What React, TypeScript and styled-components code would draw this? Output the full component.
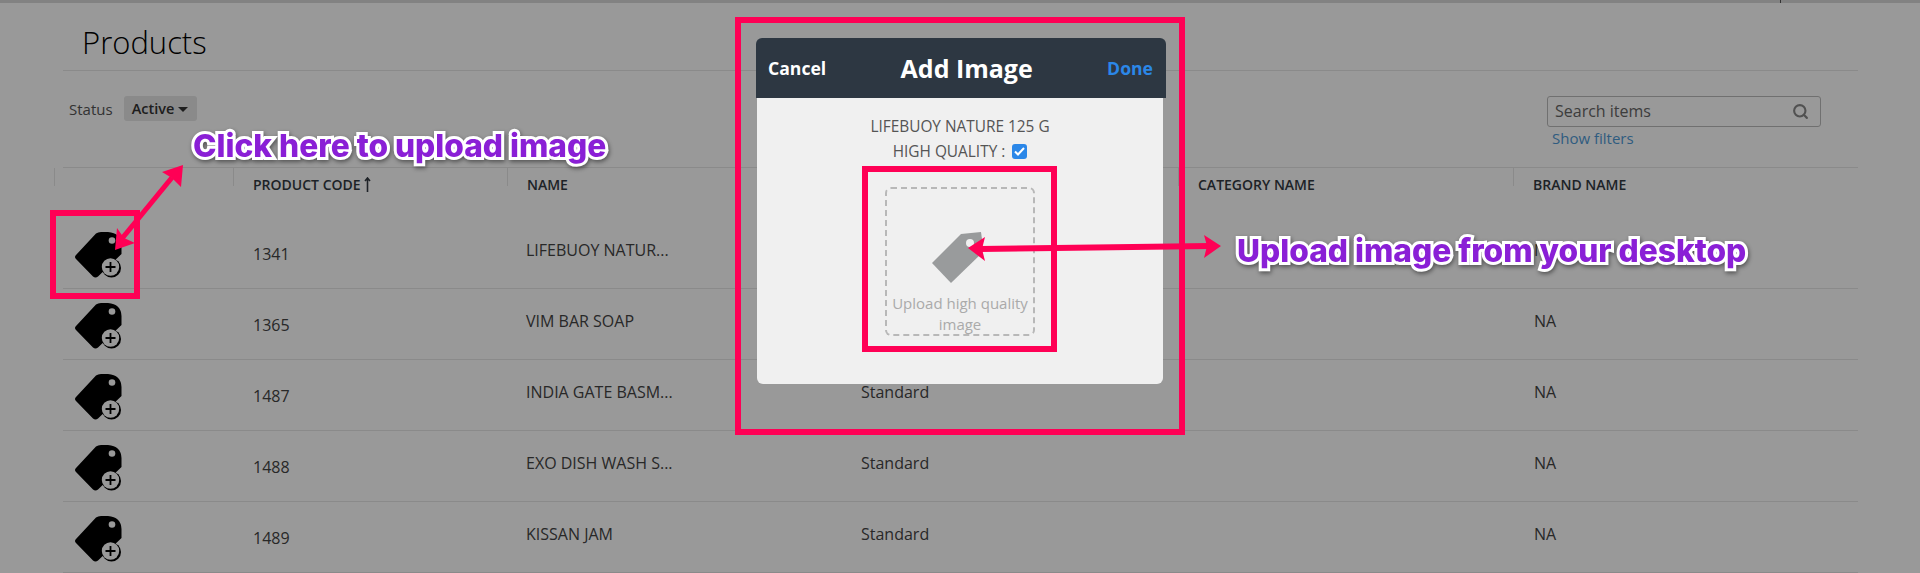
import React from 'react';
import styled, { createGlobalStyle } from 'styled-components';
import { Search } from 'lucide-react';

const Global = createGlobalStyle`
  html, body { margin: 0; padding: 0; height: 573px; overflow: hidden; background: #fff; }
  body { font-family: "Open Sans", "Liberation Sans", sans-serif; color: #333; }
  * { box-sizing: border-box; }
`;

const Screen = styled.div`
  position: relative;
  width: 1920px;
  height: 573px;
  overflow: hidden;
`;
const TopBar = styled.div`
  height: 3px;
  background: #d9d9d9;
  padding-left: 1780px;
`;
const TopTick = styled.div`
  width: 1px;
  height: 3px;
  background: #555;
`;
const Content = styled.main`
  margin-left: 63px;
  width: 1795px;
`;
const TitleBar = styled.header`
  height: 68px;
  border-bottom: 1px solid #e6e6e6;
  padding: 21px 0 0 19px;
`;
const Title = styled.h1`
  margin: 0;
  font-size: 31px;
  line-height: 36px;
  font-weight: 300;
  color: #000;
`;
const Toolbar = styled.div`
  height: 96px;
  padding: 25px 37px 0 6px;
  display: flex;
  justify-content: space-between;
  align-items: flex-start;
`;
const StatusGroup = styled.div`
  display: flex;
  align-items: center;
  gap: 11px;
  height: 25px;
  font-size: 15px;
  line-height: 22px;
  color: #555;
`;
const StatusButton = styled.button`
  width: 73px;
  height: 25px;
  display: flex;
  align-items: center;
  justify-content: center;
  gap: 4px;
  border: 0;
  border-radius: 3px;
  background: #e6e6e6;
  font: 600 14.5px "Open Sans", sans-serif;
  color: #333;
  padding: 0;
`;
const Caret = styled.span`
  width: 0;
  height: 0;
  margin-top: 2px;
  border-left: 5px solid transparent;
  border-right: 5px solid transparent;
  border-top: 5px solid #333;
`;
const SearchColumn = styled.div`
  width: 274px;
`;
const SearchBox = styled.div`
  height: 31px;
  display: flex;
  align-items: center;
  padding: 0 11px 1px 7px;
  border: 1px solid #bbb;
  border-radius: 3px;
  color: #888;
`;
const SearchInput = styled.input`
  flex: 1;
  min-width: 0;
  border: 0;
  outline: 0;
  padding: 0;
  background: transparent;
  font: 400 16px "Open Sans", sans-serif;
  color: #555;
  &::placeholder { color: #666; opacity: 1; }
`;
const ShowFilters = styled.a`
  display: block;
  margin: 1px 0 0 5px;
  font-size: 15px;
  line-height: 20px;
  color: #4f9ad6;
`;
const Table = styled.section`
  border-top: 1px solid #e6e6e6;
`;
const HeadRow = styled.div`
  display: grid;
  grid-template-columns: 179px 274px 333px 338px 335px 345px;
  height: 50px;
  margin-left: -9px;
`;
const HeadCell = styled.div`
  position: relative;
  display: flex;
  align-items: flex-start;
  padding: 7px 20px 0;
  font-size: 14px;
  line-height: 20px;
  font-weight: 600;
  color: #333a42;
  text-transform: uppercase;
  &::before {
    content: "";
    position: absolute;
    left: 0;
    top: 0;
    width: 1px;
    height: 18px;
    background: #e6e6e6;
  }
`;
const SortArrow = styled.svg`
  margin: 2px 0 0 3px;
`;
const Row = styled.div`
  display: grid;
  grid-template-columns: 170px 273px 335px 337px 336px 344px;
  height: 71px;
  border-bottom: 1px solid #e6e6e6;
  align-items: center;
  color: #444;
`;
const IconCell = styled.div`
  padding: 3px 0 0 12px;
  display: flex;
`;
const CodeCell = styled.div`
  padding: 1px 20px 0;
  font-size: 16px;
`;
const TextCell = styled.div`
  padding: 0 20px 6px;
  font-size: 16px;
  white-space: nowrap;
`;

const Backdrop = styled.div`
  position: absolute;
  inset: 0;
  background: rgba(0, 0, 0, 0.4);
  padding: 38px 0 0 756px;
`;
const Modal = styled.div`
  width: 410px;
`;
const ModalHeader = styled.div`
  height: 60px;
  background: #2d3742;
  border-radius: 6px 6px 0 0;
  display: flex;
  align-items: center;
  justify-content: space-between;
  padding: 0 13px 0 12px;
  font-size: 17.6px;
  font-weight: 700;
  color: #fff;
`;
const ModalTitle = styled.div`
  font-size: 25px;
  font-weight: 700;
`;
const DoneLabel = styled.span`
  color: #2b87e8;
`;
const ModalBody = styled.div`
  width: 406px;
  height: 286px;
  margin-left: 1px;
  background: #f0f0f0;
  border-radius: 0 0 6px 6px;
  display: flex;
  flex-direction: column;
  align-items: center;
  padding-top: 18px;
  font-size: 15.4px;
  color: #555;
`;
const ProductName = styled.div`
  line-height: 22px;
  height: 22px;
`;
const QualityRow = styled.label`
  display: flex;
  align-items: center;
  gap: 7px;
  height: 24px;
  margin-top: 1px;
`;
const QualityCheck = styled.span`
  width: 15px;
  height: 15px;
  border-radius: 3px;
  background: #2b87e8;
  display: flex;
  align-items: center;
  justify-content: center;
`;
const DropZone = styled.div`
  width: 150px;
  height: 149px;
  margin-top: 24px;
  border: 2px dashed #b8b8b8;
  border-radius: 6px;
  display: flex;
  flex-direction: column;
  align-items: center;
  padding-top: 43px;
  color: #aaa;
  font-size: 15px;
  line-height: 21px;
  text-align: center;
`;
const UploadTagSvg = styled.svg`
  margin-right: 6px;
  flex: none;
`;
const DropText = styled.div`
  margin-top: 10px;
  white-space: nowrap;
`;

const OuterMark = styled.div`
  position: absolute;
  left: 735px;
  top: 17px;
  width: 450px;
  height: 418px;
  border: 6px solid #ff0055;
`;
const InnerMark = styled.div`
  position: absolute;
  left: 862px;
  top: 166px;
  width: 195px;
  height: 186px;
  border: 6px solid #ff0055;
`;
const RowMark = styled.div`
  position: absolute;
  left: 50px;
  top: 210px;
  width: 90px;
  height: 89px;
  border: 6px solid #ff0055;
`;
const ArrowLayer = styled.svg`
  position: absolute;
  left: 0;
  top: 0;
`;
const Callout = styled.div<{ $left: number; $top: number }>`
  position: absolute;
  left: ${p => p.$left}px;
  top: ${p => p.$top}px;
  font-family: Inter, "Open Sans", sans-serif;
  font-size: 31.7px;
  line-height: 36px;
  font-weight: 800;
  white-space: nowrap;
  color: #8a1fd6;
  -webkit-text-stroke: 6px #fff;
  paint-order: stroke fill;
  filter: drop-shadow(1px 2px 2px rgba(0, 0, 0, 0.45));
`;

const TagIcon = () => (
  <svg width="47" height="46" viewBox="0 0 47 46" aria-hidden="true">
    <path
      d="M1 23 L21 1.5 Q23 0 26 0 L33 0 Q46 1 46.5 13 L46.5 22 L23 44.5 Q20.5 46.5 18 44.5 L1 27 Q-1 25 1 23 Z"
      fill="#000"
    />
    <circle cx="37" cy="8.5" r="3.3" fill="#fff" />
    <circle cx="36.5" cy="36" r="9.5" fill="#000" />
    <circle cx="35.5" cy="35" r="8.7" fill="#fff" />
    <path d="M35.5 30 V40 M30.5 35 H40.5" stroke="#000" strokeWidth="1.8" fill="none" />
  </svg>
);

const UploadTag = () => (
  <UploadTagSvg width="50" height="51" viewBox="0 0 50 51" aria-hidden="true">
    <path d="M0 31 L29 2 L49 0 L50 7 L50 21 L19 51 Z" fill="#999b9c" />
    <circle cx="38" cy="11" r="4" fill="#f0f0f0" />
  </UploadTagSvg>
);

const rows = [
  { code: '1341', name: 'LIFEBUOY NATUR...', type: 'Standard' },
  { code: '1365', name: 'VIM BAR SOAP', type: 'Standard' },
  { code: '1487', name: 'INDIA GATE BASM...', type: 'Standard' },
  { code: '1488', name: 'EXO DISH WASH S...', type: 'Standard' },
  { code: '1489', name: 'KISSAN JAM', type: 'Standard' },
];

export default function App() {
  return (
    <Screen>
      <Global />
      <TopBar><TopTick /></TopBar>
      <Content>
        <TitleBar><Title>Products</Title></TitleBar>
        <Toolbar>
          <StatusGroup>
            Status
            <StatusButton>Active<Caret /></StatusButton>
          </StatusGroup>
          <SearchColumn>
            <SearchBox>
              <SearchInput placeholder="Search items" readOnly />
              <Search size={17} strokeWidth={3} />
            </SearchBox>
            <ShowFilters>Show filters</ShowFilters>
          </SearchColumn>
        </Toolbar>
        <Table>
          <HeadRow>
            <HeadCell />
            <HeadCell>
              Product code
              <SortArrow width="7" height="15" viewBox="0 0 7 15" aria-hidden="true">
                <path d="M3.5 15 V1 M1 4 L3.5 1 L6 4" stroke="#333a42" strokeWidth="1.6" fill="none" />
              </SortArrow>
            </HeadCell>
            <HeadCell>Name</HeadCell>
            <HeadCell>Type</HeadCell>
            <HeadCell>Category name</HeadCell>
            <HeadCell>Brand name</HeadCell>
          </HeadRow>
          {rows.map(r => (
            <Row key={r.code}>
              <IconCell><TagIcon /></IconCell>
              <CodeCell>{r.code}</CodeCell>
              <TextCell>{r.name}</TextCell>
              <TextCell>{r.type}</TextCell>
              <TextCell />
              <TextCell>NA</TextCell>
            </Row>
          ))}
        </Table>
      </Content>
      <Backdrop>
        <Modal>
          <ModalHeader>
            <span>Cancel</span>
            <ModalTitle>Add Image</ModalTitle>
            <DoneLabel>Done</DoneLabel>
          </ModalHeader>
          <ModalBody>
            <ProductName>LIFEBUOY NATURE 125 G</ProductName>
            <QualityRow>
              HIGH QUALITY :
              <QualityCheck>
                <svg width="11" height="9" viewBox="0 0 11 9" aria-hidden="true">
                  <path d="M1 4.5 L4 7.5 L10 1" stroke="#fff" strokeWidth="2" fill="none" />
                </svg>
              </QualityCheck>
            </QualityRow>
            <DropZone>
              <UploadTag />
              <DropText>Upload high quality<br />image</DropText>
            </DropZone>
          </ModalBody>
        </Modal>
      </Backdrop>
      <OuterMark />
      <InnerMark />
      <RowMark />
      <ArrowLayer width="1920" height="573" viewBox="0 0 1920 573" aria-hidden="true">
        <g fill="#ff0055">
          <path d="M120 237 L170 176 L174 179 L124 240 Z" />
          <path d="M115 250 L117 228 L124 238 L135 243 Z" />
          <path d="M183 165 L162 172 L172 178 L181 187 Z" />
          <path d="M980 246 L1210 243 L1210 249 L980 252 Z" />
          <path d="M968 248 L985 237 L982 249 L985 261 Z" />
          <path d="M1221 246 L1204 235 L1207 246 L1204 258 Z" />
        </g>
      </ArrowLayer>
      <Callout $left={193} $top={128}>Click here to upload image</Callout>
      <Callout $left={1237} $top={233}>Upload image from your desktop</Callout>
    </Screen>
  );
}
